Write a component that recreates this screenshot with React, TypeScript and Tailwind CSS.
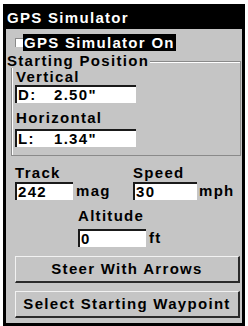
import React from "react";

const font = { fontFamily: '"Liberation Sans", Arial, sans-serif' };

function Field({
  prefix,
  value,
  width,
}: {
  prefix?: string;
  value: string;
  width: string;
}) {
  return (
    <div
      className={`${width} h-[18px] bg-white border-t-2 border-l-2 border-[#1a1a1a] flex items-center pl-[1px] leading-[16px]`}
    >
      {prefix && <span className="w-[36px]">{prefix}</span>}
      <span>{value}</span>
    </div>
  );
}

function Button({ label }: { label: string }) {
  return (
    <button className="ml-[9px] mr-[2px] h-[27px] border-t border-l border-t-[#f2f2f2] border-l-[#f2f2f2] border-b-2 border-r-2 border-b-[#2a2a2a] border-r-[#2a2a2a] bg-[#c5c5c5] text-center leading-[24px] tracking-[1.3px] font-bold text-[15px] text-black">
      {label}
    </button>
  );
}

export default function App() {
  return (
    <div className="w-[248px] h-[326px] bg-white pt-[4px] pl-[3px]" style={font}>
      <div className="w-[242px] h-[322px] border-[3px] border-black bg-[#c5c5c5] flex flex-col text-[15px] font-bold tracking-[1.3px] text-black">
        <div className="h-[22px] bg-black text-white pl-[1px] leading-[22px]">GPS Simulator</div>

        <div className="mt-[5px] flex items-center h-[17px]">
          <div className="ml-[9px] w-[8px] h-[9px] bg-white border-t border-l border-[#8a8a8a]" />
          <span className="bg-black text-white h-[17px] leading-[17px] pl-[1px] pr-[1px]">GPS Simulator On</span>
        </div>

        <div className="relative mt-[10px] ml-[5px] mr-[1px] border border-[#8a8a8a] shadow-[inset_1px_1px_0_#ffffff] pt-[7px] pb-[8px] flex flex-col">
          <span className="absolute -top-[9px] -left-[5px] bg-[#c5c5c5] leading-[15px] pr-[1px]">Starting Position</span>
          <span className="ml-[4px] leading-[15px]">Vertical</span>
          <div className="mt-[1px] ml-[3px]">
            <Field prefix="D:" value={'2.50"'} width="w-[121px]" />
          </div>
          <span className="ml-[4px] mt-[7px] leading-[15px]">Horizontal</span>
          <div className="mt-[4px] ml-[3px]">
            <Field prefix="L:" value={'1.34"'} width="w-[121px]" />
          </div>
        </div>

        <div className="mt-[9px] ml-[9px] flex">
          <div className="w-[118px] flex flex-col">
            <span className="leading-[15px]">Track</span>
            <div className="mt-[2px] flex items-center">
              <Field value="242" width="w-[58px]" />
              <span className="ml-[3px] leading-[16px]">mag</span>
            </div>
          </div>
          <div className="flex flex-col">
            <span className="leading-[15px]">Speed</span>
            <div className="mt-[2px] flex items-center">
              <Field value="30" width="w-[64px]" />
              <span className="ml-[2px] leading-[16px]">mph</span>
            </div>
          </div>
        </div>

        <div className="mt-[8px] ml-[72px] flex flex-col">
          <span className="leading-[15px]">Altitude</span>
          <div className="mt-[6px] flex items-center">
            <Field value="0" width="w-[68px]" />
            <span className="ml-[3px] leading-[16px]">ft</span>
          </div>
        </div>

        <div className="mt-[9px] flex flex-col gap-[8px]">
          <Button label="Steer With Arrows" />
          <Button label="Select Starting Waypoint" />
        </div>
      </div>
    </div>
  );
}
